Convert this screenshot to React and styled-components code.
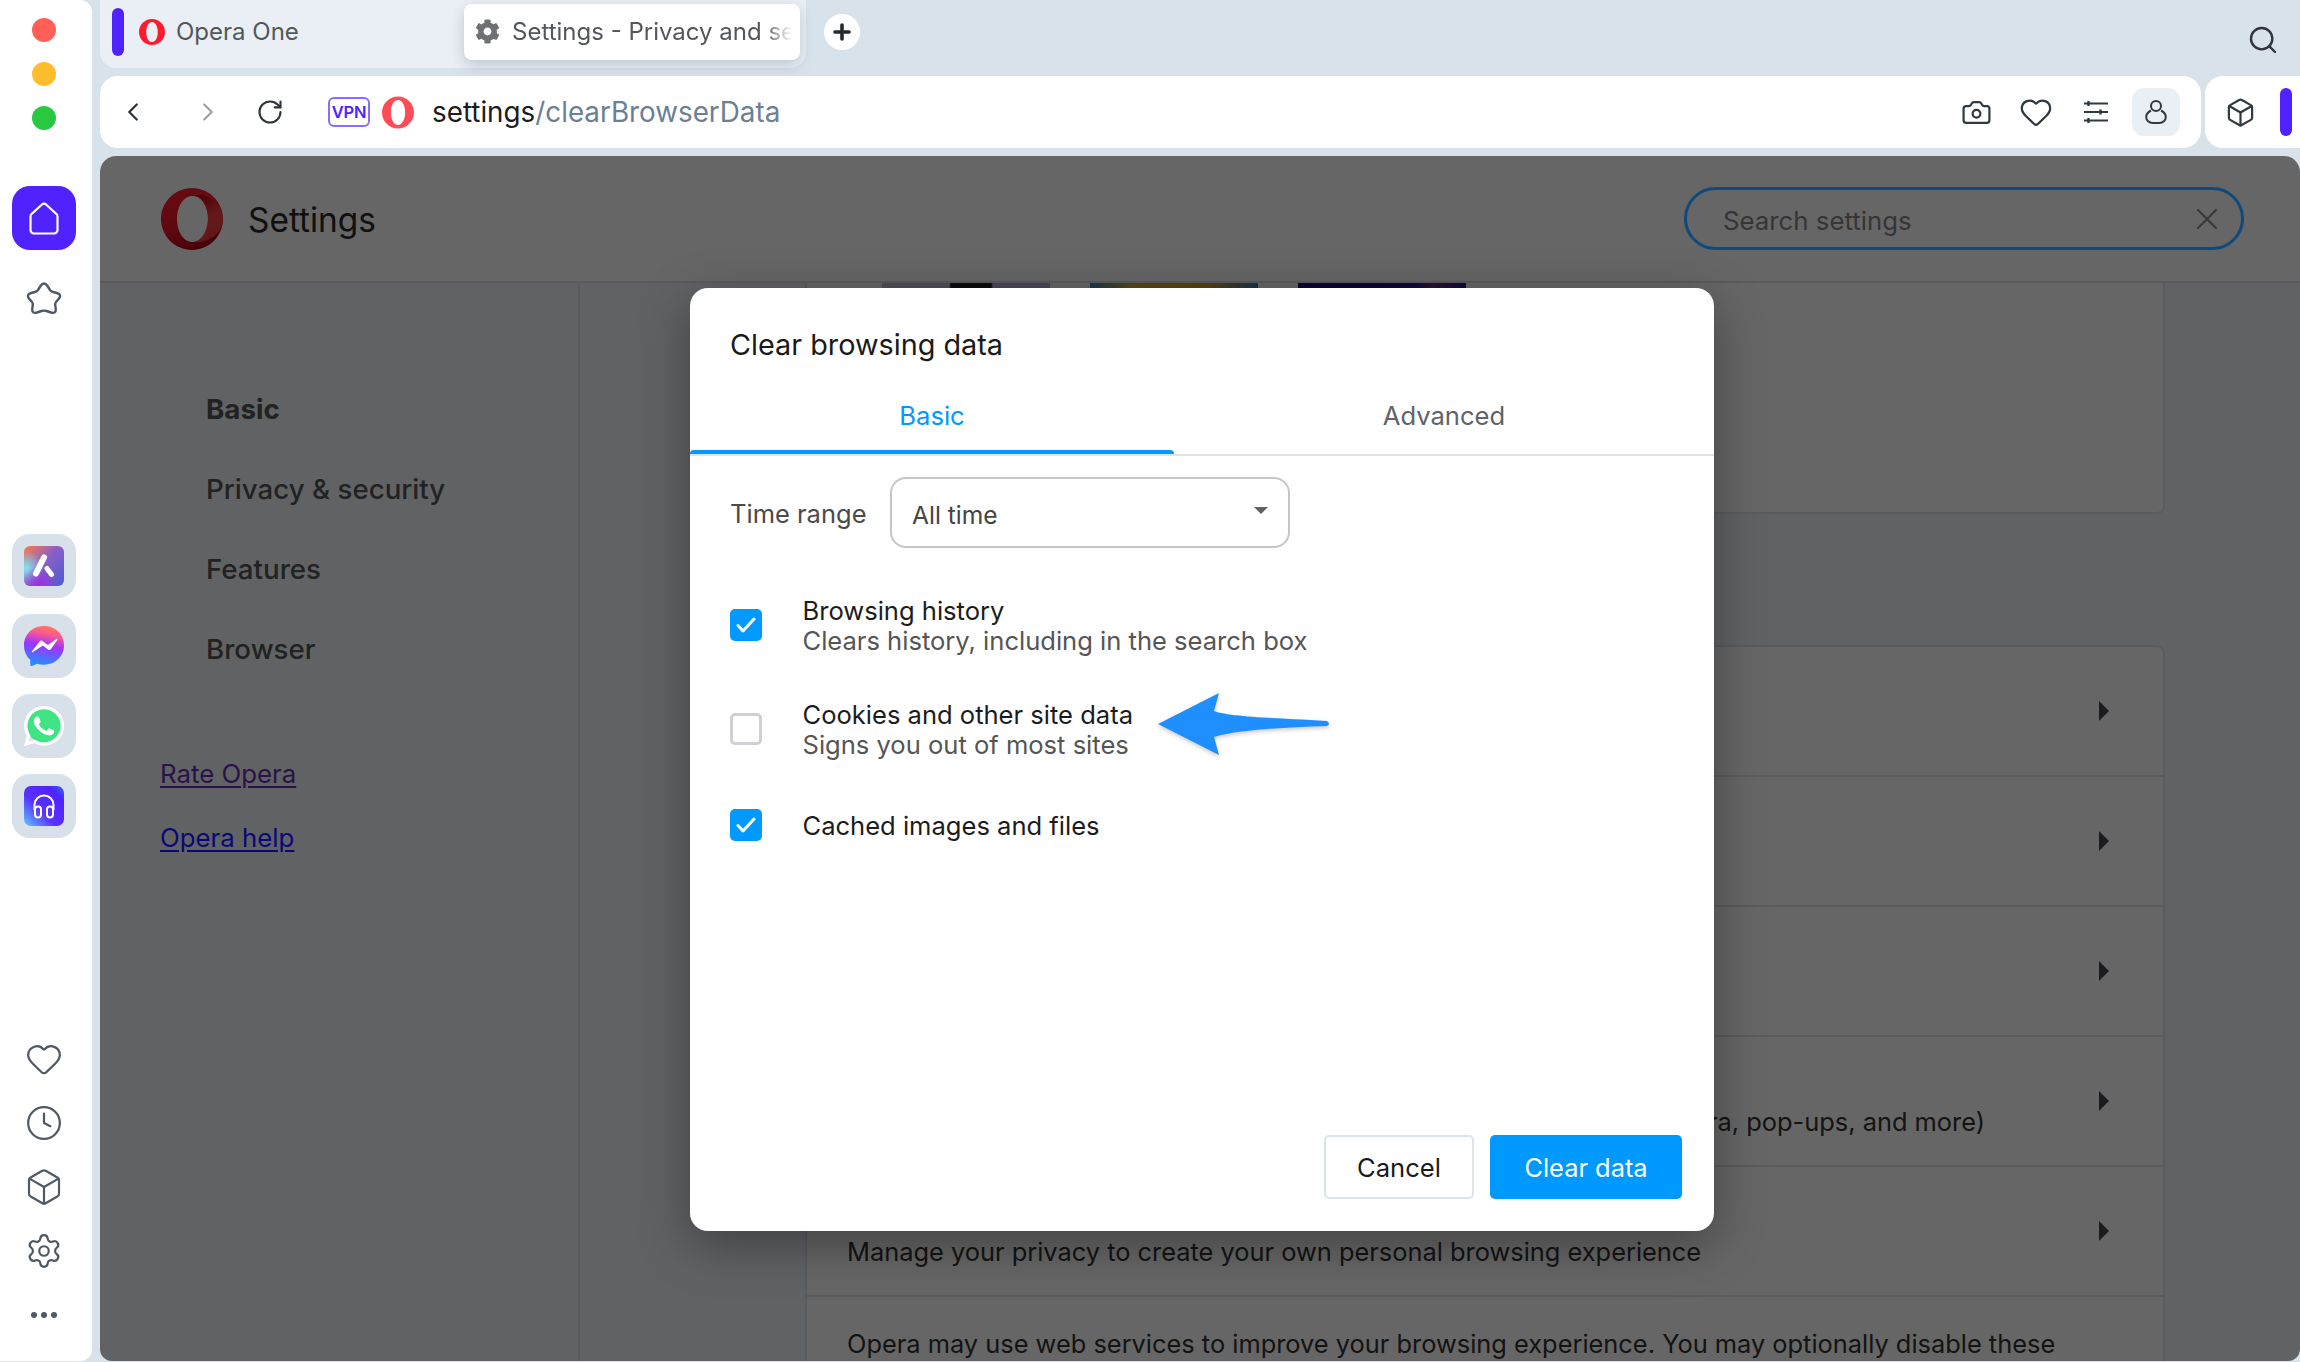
import React from 'react';
import styled, { createGlobalStyle } from 'styled-components';
import { Heart, Clock, Box, Settings as Cog, Camera, Search, X, ChevronLeft, ChevronRight, RotateCw } from 'lucide-react';
import { FaCog, FaWhatsapp } from 'react-icons/fa';

const Global = createGlobalStyle`
  html, body { margin: 0; padding: 0; background: #d8e2eb; }
  * { box-sizing: border-box; }
  body { font-family: "Inter", "Noto Sans", sans-serif; }
`;

const Screen = styled.div`
  width: 2300px; height: 1362px; display: flex; overflow: hidden; background: #d8e2eb;
`;
const Sidebar = styled.aside`
  width: 92px; height: 1361px; background: #fff; border-radius: 0 12px 12px 0;
  display: flex; flex-direction: column; align-items: center; padding: 18px 4px 24px 0; flex: none;
`;
const Lights = styled.div`display: flex; flex-direction: column; gap: 20px;`;
const Light = styled.span`
  display: block; width: 24px; height: 24px; border-radius: 50%; background: ${p => p.$c};
`;
const HomeTile = styled.div`
  width: 64px; height: 64px; margin-top: 56px; border-radius: 18px; background: #4f22ff;
  display: flex; align-items: center; justify-content: center;
`;
const StarSlot = styled.div`
  height: 64px; margin-top: 16px; display: flex; align-items: center; justify-content: center;
`;
const Apps = styled.div`display: flex; flex-direction: column; gap: 16px; margin-top: 204px;`;
const AppTile = styled.div`
  width: 64px; height: 64px; border-radius: 18px; background: #d8e0e9;
  display: flex; align-items: center; justify-content: center;
`;
const WaDisc = styled.div`
  position: relative; width: 40px; height: 40px; display: flex; align-items: center; justify-content: center;
  color: #fff;
  &::before { content: ""; position: absolute; inset: 3px; border-radius: 50%; background: #3fe584; }
  svg { position: relative; flex: none; }
`;
const Tools = styled.div`
  margin-top: auto; display: flex; flex-direction: column; align-items: center; gap: 20px; color: #4f5963;
`;
const ToolSlot = styled.div`
  width: 44px; height: 44px; display: flex; align-items: center; justify-content: center;
`;

const Main = styled.div`flex: 1; min-width: 0; padding-left: 8px; display: flex; flex-direction: column; height: 1361px;`;
const TopStrip = styled.div`display: flex; align-items: flex-start; height: 68px; flex: none;`;
const TabGroup = styled.div`
  width: 706px; height: 68px; background: #e9eff4; border-radius: 0 0 16px 16px;
  display: flex; align-items: flex-start; padding: 0 6px 0 12px;
`;
const TabBar = styled.span`display: block; width: 12px; height: 48px; margin-top: 8px; border-radius: 6px; background: #4f22ff;`;
const PlainTab = styled.div`
  display: flex; align-items: center; height: 63px; margin-left: 15px; gap: 11px;
  font-size: 24px; color: #53575c;
`;
const ActiveTab = styled.div`
  margin-left: auto; margin-top: 4px; width: 336px; height: 56px; background: #fff; border-radius: 8px;
  box-shadow: 0 5px 14px rgba(40, 60, 80, .22);
  display: flex; align-items: center; padding: 0 8px 1px 11px; gap: 12px; color: #53575c; font-size: 24px;
  svg { flex: none; color: #6f7074; }
`;
const TabLabel = styled.span`
  flex: 1; overflow: hidden; white-space: nowrap;
  -webkit-mask-image: linear-gradient(to right, #000 90%, transparent);
  mask-image: linear-gradient(to right, #000 90%, transparent);
`;
const AddTab = styled.div`
  width: 36px; height: 36px; margin: 14px 0 0 18px; border-radius: 50%; background: #fff;
  display: flex; align-items: center; justify-content: center;
`;
const TopSearch = styled.div`margin: 24px 21px 0 auto; color: #30363c; display: flex;`;

const AddressRow = styled.div`display: flex; gap: 4px; height: 72px; margin-top: 8px; flex: none;`;
const AddressBar = styled.div`
  width: 2101px; background: #fff; border-radius: 18px; display: flex; align-items: center; position: relative;
  padding: 0 21px 0 17px;
`;
const NavBtn = styled.div`
  width: 32px; display: flex; justify-content: center; color: ${p => p.$dim ? '#9aa2aa' : '#2d343b'};
  margin-right: ${p => p.$mr}px;
`;
const Vpn = styled.span`
  width: 42px; height: 30px; border: 2px solid #8a6dff; border-radius: 6px; color: #4f22ff; margin-left: 42px;
  font-size: 16.5px; font-weight: 600; display: flex; align-items: center; justify-content: center; letter-spacing: -.3px;
`;
const UrlLogo = styled.span`display: flex; margin-left: 12px;`;
const Url = styled.div`margin-left: 18px; font-size: 27.8px; color: #1c1c1e; white-space: nowrap;`;
const UrlPath = styled.span`color: #6b7f95;`;
const BarTools = styled.div`
  margin-left: auto; display: flex; align-items: center; color: #2f3942; margin-right: 0;
`;
const BarTool = styled.div`
  width: 60px; height: 48px; display: flex; align-items: center; justify-content: center;
`;
const ProfileTool = styled.div`
  width: 48px; height: 48px; margin-left: 6px; border-radius: 12px; background: #e9eff4;
  display: flex; align-items: center; justify-content: center;
`;
const ExtBox = styled.div`
  flex: 1; background: #fff; border-radius: 18px 0 0 18px; display: flex; align-items: center;
  justify-content: space-between; padding: 0 8px 0 20px; color: #2f3942;
`;
const ExtBar = styled.span`display: block; width: 12px; height: 48px; border-radius: 6px; background: #4f22ff;`;

const Panel = styled.div`
  position: relative; flex: 1; margin-top: 8px; overflow: hidden; background: #f2f5fa;
  border-radius: 16px 16px 12px 12px; display: flex; flex-direction: column;
`;
const Header = styled.header`
  height: 127px; flex: none; background: #fff; border-bottom: 2px solid #e2e4ea;
  display: flex; align-items: center; padding: 0 56px 0 61px;
`;
const HeaderTitle = styled.h1`
  margin: 3px 0 0 24px; font-size: 33.4px; font-weight: 400; color: #2a2a2a;
`;
const SearchBox = styled.div`
  position: relative; z-index: 1;
  margin-left: auto; width: 560px; height: 63px; border: 3px solid #0f4a7d; border-radius: 32px;
  display: flex; align-items: center; justify-content: space-between; padding: 3px 16px 0 36px;
  color: #353538; font-size: 25.8px;
`;
const SearchClear = styled.span`display: flex; margin-top: -3px; color: #3b3b3b;`;
const Body = styled.div`flex: 1; display: flex; min-height: 0;`;
const Nav = styled.nav`
  width: 480px; flex: none; border-right: 2px solid #e2e4ea; padding: 85.5px 0 0 60px;
`;
const NavItem = styled.div`
  height: 80px; line-height: 80px; padding-left: 46px; font-size: 27.7px; color: #555;
  font-weight: ${p => p.$bold ? 700 : 500};
`;
const NavLink = styled.a`
  position: relative; z-index: 1;
  display: block; width: fit-content; height: 64px; line-height: 64px; font-size: 25.8px; text-decoration: underline;
  text-underline-offset: 3px; color: ${p => p.$c};
  &:first-of-type { margin-top: 53px; }
`;
const Column = styled.div`flex: 1; padding: 0 135px 0 225px; display: flex; flex-direction: column;`;
const ThemeCard = styled.section`
  height: 231px; flex: none; background: #fff; border: 2px solid #e2e4ea; border-top: 0;
  border-radius: 0 0 8px 8px; display: flex; gap: 40px; padding-left: 75px;
`;
const Thumb = styled.div`width: 168px; height: 5px; background: ${p => p.$bg};`;
const Card = styled.section`
  margin-top: 131px; flex: none; background: #fff; border: 2px solid #e2e4ea; border-bottom: 0;
  border-radius: 8px 8px 0 0;
`;
const Row = styled.div`
  height: 130px; display: flex; align-items: center; justify-content: space-between; padding: 0 54px 2px 40px;
  &:first-child { height: 128px; }
  & + & { border-top: 2px solid #e2e4ea; }
`;
const LastRow = styled.div`
  border-top: 2px solid #e2e4ea; padding: 27px 40px 0; font-size: 25.4px; line-height: 40px; color: #333; white-space: nowrap;
`;
const RowText = styled.div`font-size: 25.4px; line-height: 44px; color: #333; white-space: nowrap;`;
const Caret = styled.span`
  display: block; width: 0; height: 0; margin-top: 2px; border-left: 10px solid #44484e;
  border-top: 10px solid transparent; border-bottom: 10px solid transparent;
`;
const Overlay = styled.div`position: absolute; inset: 0; background: rgba(0, 0, 0, .6);`;

const Dialog = styled.div`
  position: absolute; left: 590px; top: 132px; width: 1024px; height: 943px; background: #fff;
  border-radius: 18px; box-shadow: 0 14px 50px rgba(0, 0, 0, .35);
  display: flex; flex-direction: column;
`;
const DialogTitle = styled.h2`
  margin: 0; padding: 37px 40px 0; height: 87px; line-height: 40px; font-size: 28.8px; font-weight: 400; color: #1a1a1a;
`;
const Tabs = styled.div`display: flex; height: 81px; border-bottom: 2px solid #e2e2e2; flex: none;`;
const DTab = styled.div`
  position: relative; width: ${p => p.$w}; height: 79px; display: flex; align-items: center; justify-content: center;
  padding-top: 2px; font-size: 25.6px; color: ${p => p.$active ? '#0099ff' : '#5f6368'};
  ${p => p.$active ? `&::after { content: ""; position: absolute; left: 0; right: 0; bottom: 0; height: 4px; background: #0099ff; border-radius: 4px 4px 0 0; }` : ''}
`;
const DBody = styled.div`padding: 21px 40px 0; display: flex; flex-direction: column;`;
const RangeRow = styled.div`display: flex; align-items: center; height: 71px; margin-bottom: 48px;`;
const RangeLabel = styled.span`width: 160px; font-size: 25.5px; color: #4a4a4a; margin-top: 1px;`;
const Select = styled.div`
  width: 400px; height: 71px; border: 2px solid #c6c6c6; border-radius: 16px; display: flex; align-items: center;
  justify-content: space-between; padding: 4px 20px 0 20px; font-size: 24.6px; color: #444;
`;
const SelectCaret = styled.span`
  display: block; width: 0; height: 0; margin-top: -8px; border-top: 7px solid #5f6368;
  border-left: 7px solid transparent; border-right: 7px solid transparent;
`;
const Options = styled.div`display: flex; flex-direction: column; gap: 44px;`;
const Option = styled.div`display: flex; align-items: center; min-height: 44px;`;
const Check = styled.span`
  width: 32px; height: 32px; flex: none; margin-top: -3px; border-radius: 5px; display: flex; align-items: center; justify-content: center;
  background: ${p => p.$on ? '#0099ff' : '#fff'};
  border: ${p => p.$on ? '0' : '3px solid #cfcfd4'};
`;
const OptionText = styled.div`margin-left: 40.5px; font-size: 25.55px; line-height: 30px; color: #1c1c1c;`;
const OptionSub = styled.div`color: #555;`;
const Footer = styled.div`
  margin-top: auto; padding: 0 32px 32px 0; display: flex; justify-content: flex-end; gap: 16px;
`;
const CancelBtn = styled.div`
  width: 150px; height: 64px; border: 2px solid #dbe4ec; border-radius: 5px; display: flex; align-items: center;
  justify-content: center; font-size: 25.6px; color: #1a1a1a;
`;
const ClearBtn = styled.div`
  width: 192px; height: 64px; border-radius: 5px; background: #0099ff; display: flex; align-items: center;
  justify-content: center; font-size: 25.4px; color: #fff;
`;
const ArrowMark = styled.svg`
  position: absolute; left: 466.5px; top: 404px; filter: drop-shadow(0 2px 2px rgba(0,0,0,.22));
`;

const OperaRing = ({ w, h, c = '#ff1b2d' }) => (
  <svg width={w} height={h} viewBox="0 0 26 26">
    <path fillRule="evenodd" fill={c} d="M13 0C5.8 0 0 5.8 0 13s5.8 13 13 13 13-5.8 13-13S20.2 0 13 0zm0 2.900c3.400 0 5.800 4.500 5.800 10.100s-2.400 10.100-5.800 10.100S7.200 18.600 7.200 13 9.600 2.900 13 2.900z" />
  </svg>
);

const OperaLogo = () => (
  <svg width="63" height="62" viewBox="0 0 63 62">
    <defs>
      <linearGradient id="og" x1="0.3" y1="0" x2="0.6" y2="1">
        <stop offset="0" stopColor="#ff1b2d" />
        <stop offset=".6" stopColor="#f01525" />
        <stop offset="1" stopColor="#a70014" />
      </linearGradient>
      <linearGradient id="og2" x1="0.3" y1="0" x2="0.7" y2="1">
        <stop offset="0" stopColor="#9c0000" />
        <stop offset=".5" stopColor="#ff4b4b" />
        <stop offset="1" stopColor="#ff4b4b" />
      </linearGradient>
    </defs>
    <path fillRule="evenodd" fill="url(#og)" d="M31 0C14 0 0 14 0 31s14 31 31 31 31-14 31-31S48 0 31 0zm.5 8c9 0 15.500 10.500 15.500 23s-6.500 23-15.500 23S16 43.500 16 31 22.500 8 31.500 8z" />
    <path fill="url(#og2)" d="M31 8c11-1 17 10 16 23s-7 23-16 23c11 2 31-6 31-23S48 8 38 7c-2-.3-5 .4-7 1z" opacity=".75" />
  </svg>
);

const HomeIcon = () => (
  <svg width="30" height="33" viewBox="0 0 30 33" fill="none" stroke="#fff" strokeWidth="2.2">
    <path d="M1.5 14.500c0-1 .4-1.800 1.100-2.500L12.700 2.700a3.300 3.300 0 0 1 4.600 0L27.400 12c.7.700 1.100 1.500 1.100 2.500V28a3.500 3.500 0 0 1-3.500 3.500H5A3.500 3.500 0 0 1 1.500 28z" />
  </svg>
);
const StarIcon = () => (
  <svg width="36" height="34" viewBox="0 0 36 34" fill="none" stroke="#4f5963" strokeWidth="2.4">
    <path d="M14.500 5Q18 0 21.500 5L24 9Q25 10.500 27 11L31 12Q36 13.500 33 17.500L30 21Q29 22 29.200 24L29.800 28Q30 33 25 31.500L20.500 30Q18 29.200 15.500 30L11 31.500Q6 33 6.200 28L6.800 24Q7 22 6 21L3 17.500Q0 13.500 5 12L9 11Q11 10.500 12 9Z" />
  </svg>
);
const DotsIcon = () => (
  <svg width="28" height="8" viewBox="0 0 28 8" fill="#4f5963">
    <circle cx="4" cy="4" r="3" /><circle cx="14" cy="4" r="3" /><circle cx="24" cy="4" r="3" />
  </svg>
);
const AriaIcon = () => (
  <svg width="40" height="40" viewBox="0 0 40 40">
    <defs>
      <linearGradient id="ar1" x1="0" y1="0" x2="1" y2="1">
        <stop offset="0" stopColor="#ff7a45" />
        <stop offset=".45" stopColor="#8a5fc8" />
        <stop offset="1" stopColor="#4a5cd0" />
      </linearGradient>
      <radialGradient id="ar2" cx="0.05" cy="0.55" r="0.45">
        <stop offset="0" stopColor="#7fe6f0" />
        <stop offset="1" stopColor="#7fe6f0" stopOpacity="0" />
      </radialGradient>
      <radialGradient id="ar3" cx="0.4" cy="0.95" r="0.45">
        <stop offset="0" stopColor="#a030e0" />
        <stop offset="1" stopColor="#a030e0" stopOpacity="0" />
      </radialGradient>
    </defs>
    <rect width="40" height="40" rx="6" fill="url(#ar1)" />
    <rect width="40" height="40" rx="6" fill="url(#ar2)" />
    <rect width="40" height="40" rx="6" fill="url(#ar3)" />
    <g stroke="#fff" strokeLinecap="round">
      <path d="M20 11.500L12 27.500" strokeWidth="6" />
      <path d="M23 22.500L27.500 28.500" strokeWidth="5" />
    </g>
  </svg>
);
const MessengerIcon = () => (
  <svg width="40" height="40" viewBox="0 0 40 40">
    <defs>
      <linearGradient id="ms" x1="0.5" y1="1" x2="0.7" y2="0">
        <stop offset="0" stopColor="#1e90ff" />
        <stop offset=".5" stopColor="#a033ff" />
        <stop offset=".8" stopColor="#ff5c87" />
        <stop offset="1" stopColor="#ff7a59" />
      </linearGradient>
    </defs>
    <path fill="url(#ms)" d="M20 0C8.700 0 0 8.300 0 19.400c0 5.800 2.400 10.900 6.300 14.300V39c0 .8.800 1.300 1.500 1l5.300-2.300c2.100.6 4.500 1 6.900 1 11.300 0 20-8.300 20-19.400S31.300 0 20 0z" />
    <path fill="#fff" d="M8 25.300l7.800-10c.6-.8 1.700-1 2.500-.4l4.800 3.600c.4.300 1 .3 1.400 0l8-5.600c.6-.4 1.300.2 1 .8l-6.700 9.600c-.6.800-1.700 1-2.500.4l-4.800-3.600c-.4-.3-1-.3-1.400 0l-9.200 6c-.6.500-1.300-.2-.9-.8z" />
  </svg>
);
const MusicIcon = () => (
  <svg width="40" height="40" viewBox="0 0 40 40">
    <defs>
      <linearGradient id="mu" x1="0" y1="1" x2="1" y2="0">
        <stop offset="0" stopColor="#5ec8ff" />
        <stop offset=".4" stopColor="#5a32ff" />
        <stop offset=".8" stopColor="#4f22ff" />
        <stop offset="1" stopColor="#2a6cff" />
      </linearGradient>
    </defs>
    <rect width="40" height="40" rx="7" fill="url(#mu)" />
    <g fill="none" stroke="#fff" strokeWidth="2">
      <path d="M10.500 24v-5a9.500 9.500 0 0 1 19 0v5" />
      <rect x="11" y="20.500" width="6" height="11" rx="3" />
      <rect x="23" y="20.500" width="6" height="11" rx="3" />
    </g>
  </svg>
);
const SlidersIcon = () => (
  <svg width="24" height="22" viewBox="0 0 24 22" fill="none" stroke="#2f3942" strokeWidth="2">
    <path d="M0 2.500h24M0 11h24M0 19.500h24" />
    <path d="M4.500 0v5M16.500 8.500v5M4.500 17v5" strokeWidth="2.4" />
  </svg>
);
const PersonIcon = () => (
  <svg width="22" height="24" viewBox="0 0 22 24" fill="none" stroke="#2f3942" strokeWidth="2">
    <circle cx="11" cy="6" r="5" />
    <path d="M6 10.500C3 12 1.200 14 1.200 17c0 3.500 3 6 6.500 6h6.600c3.500 0 6.500-2.500 6.500-6 0-3-1.800-5-4.800-6.500" />
  </svg>
);
const CheckMark = () => (
  <svg width="20" height="16" viewBox="0 0 20 16" fill="none" stroke="#fff" strokeWidth="3" strokeLinecap="round" strokeLinejoin="round">
    <path d="M2 8.500l5 5.500L18 2" />
  </svg>
);

export default function App() {
  return (
    <Screen>
      <Global />
      <Sidebar>
        <Lights>
          <Light $c="#ff5f57" />
          <Light $c="#ffbd2e" />
          <Light $c="#28c840" />
        </Lights>
        <HomeTile><HomeIcon /></HomeTile>
        <StarSlot><StarIcon /></StarSlot>
        <Apps>
          <AppTile><AriaIcon /></AppTile>
          <AppTile><MessengerIcon /></AppTile>
          <AppTile><WaDisc><FaWhatsapp size={46} /></WaDisc></AppTile>
          <AppTile><MusicIcon /></AppTile>
        </Apps>
        <Tools>
          <ToolSlot><Heart size={38} strokeWidth={1.4} /></ToolSlot>
          <ToolSlot><Clock size={38} strokeWidth={1.4} /></ToolSlot>
          <ToolSlot><Box size={40} strokeWidth={1.3} /></ToolSlot>
          <ToolSlot><Cog size={38} strokeWidth={1.4} /></ToolSlot>
          <ToolSlot><DotsIcon /></ToolSlot>
        </Tools>
      </Sidebar>
      <Main>
        <TopStrip>
          <TabGroup>
            <TabBar />
            <PlainTab><OperaRing w={26} h={26} />Opera One</PlainTab>
            <ActiveTab><FaCog size={25} /><TabLabel>Settings - Privacy and security</TabLabel></ActiveTab>
          </TabGroup>
          <AddTab>
            <svg width="18" height="18" viewBox="0 0 18 18" stroke="#23292f" strokeWidth="3.6" strokeLinecap="round"><path d="M9 2v14M2 9h14" /></svg>
          </AddTab>
          <TopSearch><Search size={32} strokeWidth={1.8} /></TopSearch>
        </TopStrip>
        <AddressRow>
          <AddressBar>
            <NavBtn $mr={43}><ChevronLeft size={30} strokeWidth={1.8} /></NavBtn>
            <NavBtn $dim $mr={30}><ChevronRight size={30} strokeWidth={1.8} /></NavBtn>
            <NavBtn $mr={0}><RotateCw size={28} strokeWidth={1.8} /></NavBtn>
            <Vpn>VPN</Vpn>
            <UrlLogo><OperaRing w={32} h={33} c="#ff4b55" /></UrlLogo>
            <Url>settings<UrlPath>/clearBrowserData</UrlPath></Url>
            <BarTools>
              <BarTool><Camera size={31} strokeWidth={1.7} /></BarTool>
              <BarTool><Heart size={34} strokeWidth={1.6} /></BarTool>
              <BarTool><SlidersIcon /></BarTool>
              <ProfileTool><PersonIcon /></ProfileTool>
            </BarTools>
          </AddressBar>
          <ExtBox><Box size={31} strokeWidth={1.7} /><ExtBar /></ExtBox>
        </AddressRow>
        <Panel>
          <Header>
            <OperaLogo />
            <HeaderTitle>Settings</HeaderTitle>
            <SearchBox>Search settings<SearchClear><X size={36} strokeWidth={1.5} /></SearchClear></SearchBox>
          </Header>
          <Body>
            <Nav>
              <NavItem $bold>Basic</NavItem>
              <NavItem>Privacy &amp; security</NavItem>
              <NavItem>Features</NavItem>
              <NavItem>Browser</NavItem>
              <NavLink $c="#2a1248">Rate Opera</NavLink>
              <NavLink $c="#0a0878">Opera help</NavLink>
            </Nav>
            <Column>
              <ThemeCard>
                <Thumb $bg="linear-gradient(90deg,#c8c0d8 0 40%,#222 41% 65%,#c0b0e0 66%)" />
                <Thumb $bg="linear-gradient(90deg,#3a90c0,#e0b030 25%,#e0a020 70%,#3a80b0)" />
                <Thumb $bg="linear-gradient(90deg,#180890,#2a10a0 70%,#703080 80%,#2a10a0)" />
              </ThemeCard>
              <Card>
                <Row><span /><Caret /></Row>
                <Row><span /><Caret /></Row>
                <Row><span /><Caret /></Row>
                <Row>
                  <RowText>Site settings<br />Controls what information websites can use and display (location, camera, pop-ups, and more)</RowText>
                  <Caret />
                </Row>
                <Row>
                  <RowText>Privacy<br />Manage your privacy to create your own personal browsing experience</RowText>
                  <Caret />
                </Row>
                <LastRow>Opera may use web services to improve your browsing experience. You may optionally disable these</LastRow>
              </Card>
            </Column>
          </Body>
          <Overlay />
          <Dialog>
            <DialogTitle>Clear browsing data</DialogTitle>
            <Tabs>
              <DTab $active $w="484px">Basic</DTab>
              <DTab $w="540px">Advanced</DTab>
            </Tabs>
            <DBody>
              <RangeRow>
                <RangeLabel>Time range</RangeLabel>
                <Select>All time<SelectCaret /></Select>
              </RangeRow>
              <Options>
                <Option>
                  <Check $on><CheckMark /></Check>
                  <OptionText>Browsing history<OptionSub>Clears history, including in the search box</OptionSub></OptionText>
                </Option>
                <Option>
                  <Check />
                  <OptionText>Cookies and other site data<OptionSub>Signs you out of most sites</OptionSub></OptionText>
                </Option>
                <Option>
                  <Check $on><CheckMark /></Check>
                  <OptionText>Cached images and files</OptionText>
                </Option>
              </Options>
            </DBody>
            <Footer>
              <CancelBtn>Cancel</CancelBtn>
              <ClearBtn>Clear data</ClearBtn>
            </Footer>
            <ArrowMark width="174" height="64" viewBox="0 0 174 64">
              <path fill="#1f8fff" d="M1 32L62 1 57 19C72 25 120 26 170 29Q174 32 170 34C130 35 80 38 57 45L62 63Z" />
            </ArrowMark>
          </Dialog>
        </Panel>
      </Main>
    </Screen>
  );
}
